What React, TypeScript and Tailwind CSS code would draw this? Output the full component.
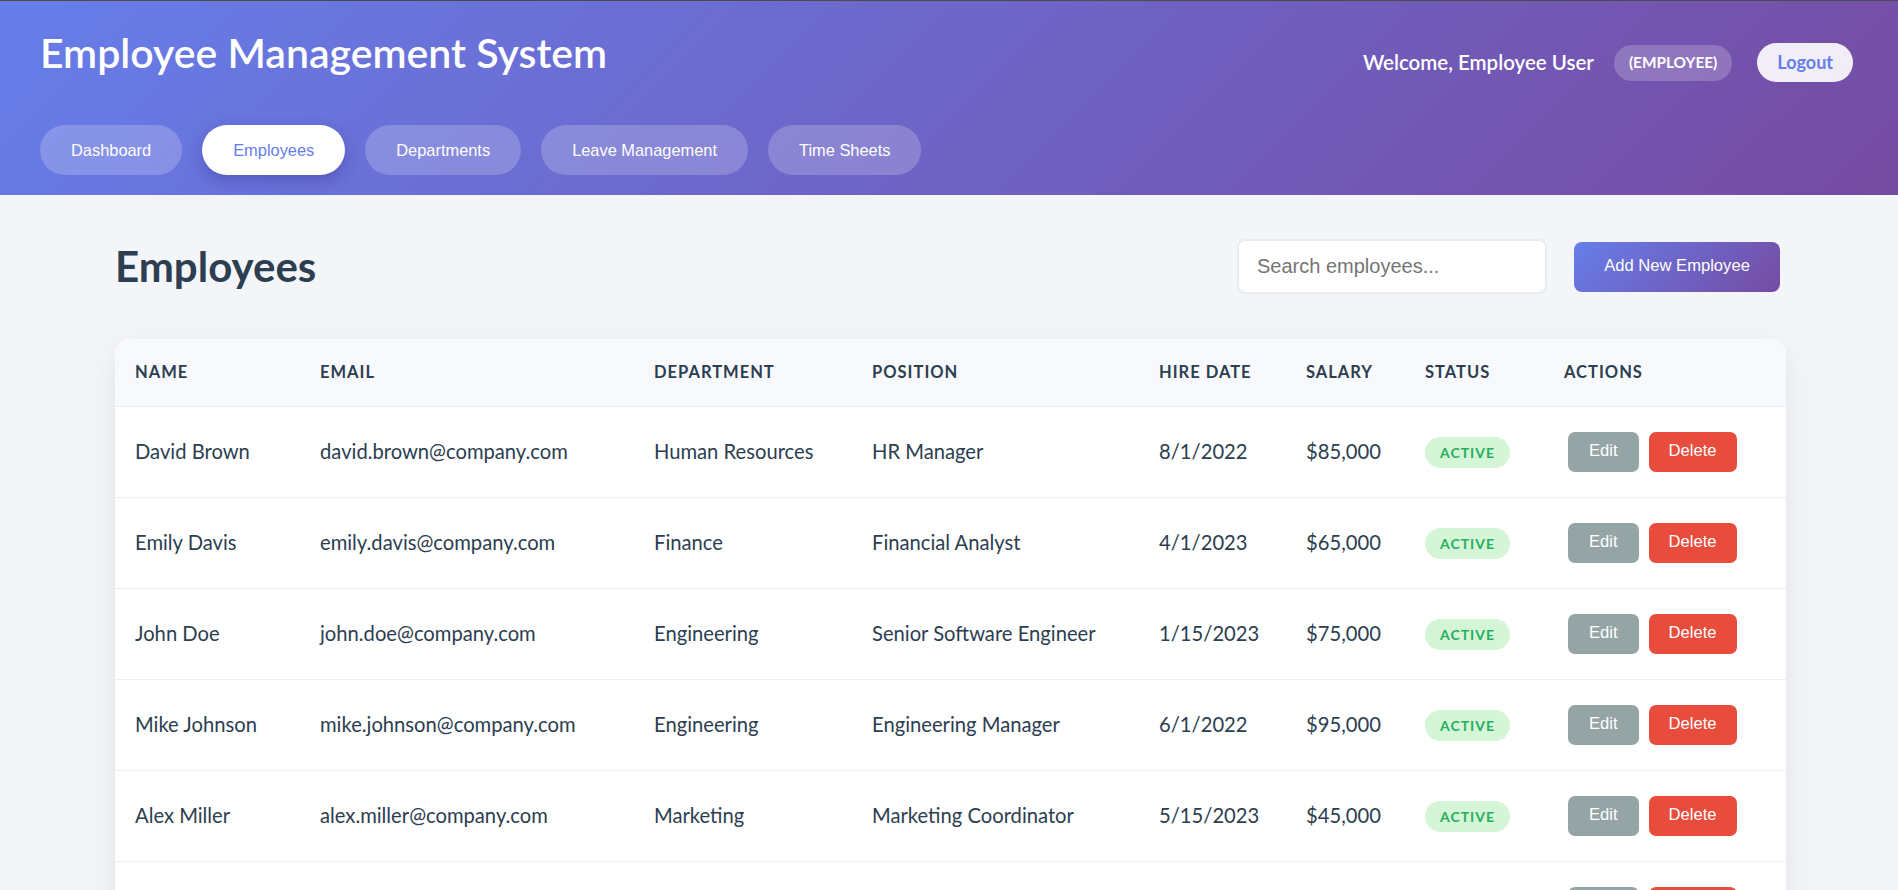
const employees = [
  { name: 'David Brown', email: 'david.brown@company.com', dept: 'Human Resources', position: 'HR Manager', hired: '8/1/2022', salary: '$85,000' },
  { name: 'Emily Davis', email: 'emily.davis@company.com', dept: 'Finance', position: 'Financial Analyst', hired: '4/1/2023', salary: '$65,000' },
  { name: 'John Doe', email: 'john.doe@company.com', dept: 'Engineering', position: 'Senior Software Engineer', hired: '1/15/2023', salary: '$75,000' },
  { name: 'Mike Johnson', email: 'mike.johnson@company.com', dept: 'Engineering', position: 'Engineering Manager', hired: '6/1/2022', salary: '$95,000' },
  { name: 'Alex Miller', email: 'alex.miller@company.com', dept: 'Marketing', position: 'Marketing Coordinator', hired: '5/15/2023', salary: '$45,000' },
  { name: 'Jane Smith', email: 'jane.smith@company.com', dept: 'Marketing', position: 'Marketing Manager', hired: '3/1/2022', salary: '$70,000' },
];

const navItems = ['Dashboard', 'Employees', 'Departments', 'Leave Management', 'Time Sheets'];

const columns = ['Name', 'Email', 'Department', 'Position', 'Hire Date', 'Salary', 'Status', 'Actions'];

export default function App() {
  return (
    <div className="min-h-screen bg-[#f4f5f9] font-['Lato','Open_Sans',sans-serif] text-[#2c3e50]">
      {/* Header */}
      <header className="border-t border-[#4b4b4b] bg-[linear-gradient(135deg,#667eea_0%,#764ba2_100%)] pl-[40px] pr-[45px] pt-[29px] pb-[20px] text-white">
        <div className="flex items-start justify-between">
          <h1 className="text-[41px] leading-[46px] font-semibold">Employee Management System</h1>
          <div className="mt-[13px] flex items-center">
            <span className="text-[20.5px] font-semibold">Welcome, Employee User</span>
            <span className="ml-[20px] flex h-[36px] items-center rounded-full bg-white/20 px-[15px] text-[15.4px] font-bold">
              (EMPLOYEE)
            </span>
            <button className="ml-[25px] h-[39px] rounded-full bg-white/90 px-[20px] text-[18px] font-bold text-[#667eea]">
              Logout
            </button>
          </div>
        </div>

        {/* Nav */}
        <nav className="mt-[43px] flex gap-[20px] font-['Liberation_Sans',Arial,sans-serif]">
          {navItems.map((item) =>
            item === 'Employees' ? (
              <button
                key={item}
                className="h-[50px] rounded-full bg-white px-[31px] text-[16.4px] text-[#667eea] shadow-[0_6px_16px_rgba(40,30,120,0.3)]"
              >
                {item}
              </button>
            ) : (
              <button key={item} className="h-[50px] rounded-full bg-white/20 px-[31px] text-[16.4px] text-white">
                {item}
              </button>
            )
          )}
        </nav>
      </header>

      {/* Content */}
      <main className="pl-[115px] pr-[112px] pt-[40px]">
        <div className="flex items-center justify-between">
          <h2 className="text-[42px] font-bold text-[#2c3e50]">Employees</h2>
          <div className="mr-[6px] flex items-center gap-[27px]">
            <input
              type="text"
              placeholder="Search employees..."
              className="h-[55px] w-[310px] rounded-[8px] border-2 border-[#e8ebf0] bg-white pl-[18px] font-['Liberation_Sans',Arial,sans-serif] text-[20px] placeholder:text-[#757575] outline-none"
            />
            <button className="h-[50px] w-[206px] rounded-[8px] bg-[linear-gradient(135deg,#667eea_0%,#764ba2_100%)] font-['Liberation_Sans',Arial,sans-serif] text-[16.6px] text-white">
              Add New Employee
            </button>
          </div>
        </div>

        {/* Table */}
        <div className="mt-[41px] overflow-hidden rounded-[15px] bg-white shadow-[0_10px_30px_rgba(0,0,0,0.08)]">
          <table className="w-full table-fixed">
            <colgroup>
              <col className="w-[185px]" />
              <col className="w-[334px]" />
              <col className="w-[218px]" />
              <col className="w-[287px]" />
              <col className="w-[147px]" />
              <col className="w-[119px]" />
              <col className="w-[139px]" />
              <col />
            </colgroup>
            <thead>
              <tr className="border-b border-[#e9edf1] bg-[#f8f9fc]">
                {columns.map((c) => (
                  <th key={c} className="h-[67px] pl-[20px] text-left text-[16.5px] font-bold uppercase tracking-[1px] text-[#2c3e50]">
                    {c}
                  </th>
                ))}
              </tr>
            </thead>
            <tbody>
              {employees.map((e) => (
                <tr key={e.email} className="border-b border-[#ecf0f1] text-[20.2px]">
                  <td className="h-[91px] pl-[20px]">{e.name}</td>
                  <td className="pl-[20px]">{e.email}</td>
                  <td className="pl-[20px]">{e.dept}</td>
                  <td className="pl-[20px]">{e.position}</td>
                  <td className="pl-[20px]">{e.hired}</td>
                  <td className="pl-[20px]">{e.salary}</td>
                  <td className="pl-[20px]">
                    <span className="inline-flex h-[31px] items-center rounded-full bg-[#d4f5d6] px-[15px] text-[14px] font-bold tracking-[1px] text-[#27ae60]">
                      ACTIVE
                    </span>
                  </td>
                  <td className="pl-[24px]">
                    <div className="flex gap-[10px] font-['Liberation_Sans',Arial,sans-serif] text-[16.6px] text-white">
                      <button className="h-[40px] rounded-[7px] bg-[#95a5a6] px-[21px]">Edit</button>
                      <button className="h-[40px] rounded-[7px] bg-[#e74c3c] px-[20px]">Delete</button>
                    </div>
                  </td>
                </tr>
              ))}
            </tbody>
          </table>
        </div>
      </main>
    </div>
  );
}
